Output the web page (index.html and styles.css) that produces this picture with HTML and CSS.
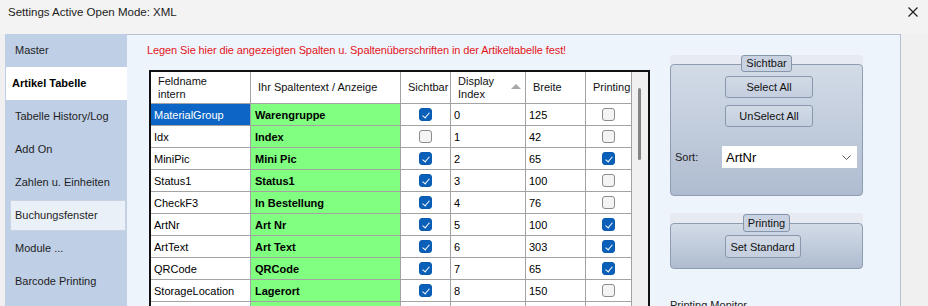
FILE: index.html
```html
<!DOCTYPE html>
<html lang="de">
    <head>
        <meta charset="UTF-8">
        <title>Settings Active Open Mode: XML</title>
        <link rel="stylesheet" href="styles.css">
    </head>

    <body>
        <div class="titlebar">
            <span class="title">Settings Active Open Mode: XML</span>
            <svg class="close" width="10" height="10" viewBox="0 0 10 10">
                <path d="M0.5 0.5 L9.5 9.5 M9.5 0.5 L0.5 9.5" stroke="#1a1a1a" stroke-width="1.1" fill="none"/>
            </svg>
        </div>

        <div class="main">
            <ul class="tabs">
                <li class="tab">Master</li>
                <li class="tab active">Artikel Tabelle</li>
                <li class="tab">Tabelle History/Log</li>
                <li class="tab">Add On</li>
                <li class="tab">Zahlen u. Einheiten</li>
                <li class="tab hover">Buchungsfenster</li>
                <li class="tab">Module ...</li>
                <li class="tab">Barcode Printing</li>
            </ul>

            <div class="panel">
                <p class="hint">Legen Sie hier die angezeigten Spalten u. Spaltenüberschriften in der Artikeltabelle fest!</p>

                <div class="grid">
                    <div class="cols">
                        <div class="row head">
                            <div class="cell">Feldname<br>intern</div>
                            <div class="cell">Ihr Spaltentext / Anzeige</div>
                            <div class="cell">Sichtbar</div>
                            <div class="cell sorted">Display<br>Index<span class="arrow"></span></div>
                            <div class="cell">Breite</div>
                            <div class="cell">Printing</div>
                        </div>
                        <div class="row">
                            <div class="cell sel">MaterialGroup</div>
                            <div class="cell caption">Warengruppe</div>
                            <div class="cell check"><span class="cb on"></span></div>
                            <div class="cell">0</div>
                            <div class="cell">125</div>
                            <div class="cell check"><span class="cb"></span></div>
                        </div>
                        <div class="row">
                            <div class="cell">Idx</div>
                            <div class="cell caption">Index</div>
                            <div class="cell check"><span class="cb"></span></div>
                            <div class="cell">1</div>
                            <div class="cell">42</div>
                            <div class="cell check"><span class="cb"></span></div>
                        </div>
                        <div class="row">
                            <div class="cell">MiniPic</div>
                            <div class="cell caption">Mini Pic</div>
                            <div class="cell check"><span class="cb on"></span></div>
                            <div class="cell">2</div>
                            <div class="cell">65</div>
                            <div class="cell check"><span class="cb on"></span></div>
                        </div>
                        <div class="row">
                            <div class="cell">Status1</div>
                            <div class="cell caption">Status1</div>
                            <div class="cell check"><span class="cb on"></span></div>
                            <div class="cell">3</div>
                            <div class="cell">100</div>
                            <div class="cell check"><span class="cb"></span></div>
                        </div>
                        <div class="row">
                            <div class="cell">CheckF3</div>
                            <div class="cell caption">In Bestellung</div>
                            <div class="cell check"><span class="cb on"></span></div>
                            <div class="cell">4</div>
                            <div class="cell">76</div>
                            <div class="cell check"><span class="cb"></span></div>
                        </div>
                        <div class="row">
                            <div class="cell">ArtNr</div>
                            <div class="cell caption">Art Nr</div>
                            <div class="cell check"><span class="cb on"></span></div>
                            <div class="cell">5</div>
                            <div class="cell">100</div>
                            <div class="cell check"><span class="cb on"></span></div>
                        </div>
                        <div class="row">
                            <div class="cell">ArtText</div>
                            <div class="cell caption">Art Text</div>
                            <div class="cell check"><span class="cb on"></span></div>
                            <div class="cell">6</div>
                            <div class="cell">303</div>
                            <div class="cell check"><span class="cb on"></span></div>
                        </div>
                        <div class="row">
                            <div class="cell">QRCode</div>
                            <div class="cell caption">QRCode</div>
                            <div class="cell check"><span class="cb on"></span></div>
                            <div class="cell">7</div>
                            <div class="cell">65</div>
                            <div class="cell check"><span class="cb on"></span></div>
                        </div>
                        <div class="row">
                            <div class="cell">StorageLocation</div>
                            <div class="cell caption">Lagerort</div>
                            <div class="cell check"><span class="cb on"></span></div>
                            <div class="cell">8</div>
                            <div class="cell">150</div>
                            <div class="cell check"><span class="cb"></span></div>
                        </div>
                        <div class="row">
                            <div class="cell"></div>
                            <div class="cell caption"></div>
                            <div class="cell check"></div>
                            <div class="cell"></div>
                            <div class="cell"></div>
                            <div class="cell check"></div>
                        </div>
                    </div>
                    <div class="scroll"><div class="thumb"></div></div>
                </div>

                <div class="side">
                    <div class="group">
                        <div class="frame frame-visible">
                            <span class="legend">Sichtbar</span>
                            <button class="btn first">Select All</button>
                            <button class="btn second">UnSelect All</button>
                            <div class="sort">
                                <span class="sort-label">Sort:</span>
                                <div class="combo">
                                    <span>ArtNr</span>
                                    <svg width="9" height="5" viewBox="0 0 9 5">
                                        <path d="M0.5 0.5 L4.5 4.5 L8.5 0.5" stroke="#555" stroke-width="1" fill="none"/>
                                    </svg>
                                </div>
                            </div>
                        </div>
                    </div>

                    <div class="group group-print">
                        <div class="frame frame-print">
                            <span class="legend">Printing</span>
                            <button class="btn std">Set Standard</button>
                        </div>
                    </div>

                    <div class="monitor">Printing Monitor</div>
                </div>
            </div>
        </div>
    </body>
</html>
```

FILE: styles.css
```css
* {
    box-sizing: border-box;
}

html, body {
    margin: 0;
    padding: 0;
}

body {
    width: 928px;
    height: 306px;
    overflow: hidden;
    background: #f0f0f0;
    font-family: "Liberation Sans", Arial, sans-serif;
    font-size: 11px;
    color: #000;
}

.titlebar {
    height: 34px;
    display: flex;
    justify-content: space-between;
    align-items: flex-start;
    padding: 5px 10px 0 8px;
    background: #f3f3f3;
}

.title {
    font-size: 11.5px;
    line-height: 14px;
    color: #1b1b1b;
}

.close {
    margin-top: 2px;
}

.main {
    display: flex;
    height: 272px;
    padding-left: 5px;
}

/* left tab strip */

.tabs {
    width: 122px;
    margin: 0;
    padding: 0;
    list-style: none;
    background: #bfcfe6;
}

.tab {
    height: 33px;
    line-height: 33px;
    padding-left: 10px;
    color: #1e1e1e;
    white-space: nowrap;
}

.tab.active {
    margin-left: 1px;
    padding-left: 6px;
    background: #fff;
    font-weight: bold;
    color: #000;
}

.tab.hover {
    height: 31px;
    line-height: 29px;
    margin: 1px 1px 1px 5px;
    padding-left: 4px;
    background: #eaf0f8;
    border: 1px solid #c9d3e1;
}

/* content panel */

.panel {
    width: 774px;
    display: grid;
    grid-template-columns: 523px 193px;
    grid-template-rows: auto 1fr;
    align-content: start;
    padding: 8px 0 0 20px;
    background: #eef4fb;
    border-top: 1px solid #b7c1ce;
    border-right: 1px solid #b7c1ce;
}

.hint {
    margin: 0;
    line-height: 14px;
    letter-spacing: -0.1px;
    color: #e3141c;
    white-space: nowrap;
}

/* data grid */

.grid {
    grid-column: 1;
    display: flex;
    width: 501px;
    height: 260px;
    margin: 13px 0 0 2px;
    border: 2px solid #111;
    border-bottom: none;
    background: #fff;
    overflow: hidden;
}

.cols {
    width: 481px;
}

.row {
    display: grid;
    grid-template-columns: 100px 150px 50px 75px 60px 46px;
    height: 22px;
}

.row.head {
    height: 32px;
}

.cell {
    display: flex;
    align-items: center;
    padding-left: 3px;
    border-right: 1px solid #a3a3a3;
    border-bottom: 1px solid #a3a3a3;
    white-space: nowrap;
    overflow: hidden;
}

.head .cell {
    padding-left: 7px;
    line-height: 13px;
    color: #111;
}

.head .cell.sorted {
    padding-right: 4px;
}

.arrow {
    margin-left: auto;
    margin-top: -2px;
    width: 0;
    height: 0;
    border-left: 5px solid transparent;
    border-right: 5px solid transparent;
    border-bottom: 5px solid #a8a8a8;
}

.cell.sel {
    background: #0d66c6;
    color: #fff;
}

.cell.caption {
    padding-left: 4px;
    background: #80ff80;
    font-weight: bold;
}

.cell.check {
    justify-content: center;
    padding-left: 0;
}

.cb {
    position: relative;
    width: 13px;
    height: 13px;
    border: 1px solid #8c8c8c;
    border-radius: 3px;
    background: #f4f4f4;
}

.cb.on {
    border-color: #0a5cb0;
    background: #0a5fb8;
}

.cb.on:after {
    content: "";
    position: absolute;
    left: 4px;
    top: 2px;
    width: 3px;
    height: 6px;
    border: solid #fff;
    border-width: 0 1px 1px 0;
    transform: rotate(40deg);
}

.scroll {
    width: 16px;
    background: #f0f0f0;
    padding: 16px 0 0 6px;
}

.thumb {
    width: 3px;
    height: 72px;
    border-radius: 2px;
    background: #858585;
}

/* right side groups */

.side {
    grid-column: 2;
    grid-row: 1 / span 2;
    padding-top: 12px;
}

.group {
    padding-top: 9px;
    background: #e7ebf1;
    border-radius: 3px 3px 4px 4px;
}

.group-print {
    margin-top: 17px;
    padding-top: 10px;
}

.frame {
    display: flex;
    flex-direction: column;
    align-items: center;
    border: 1px solid #8f9db2;
    border-radius: 4px;
    background: linear-gradient(#d3dbe7, #afbcd0);
}

.frame-visible {
    height: 132px;
}

.frame-print {
    height: 46px;
}

.legend {
    height: 17px;
    line-height: 15px;
    margin-top: -10px;
    padding: 0 4px;
    border: 1px solid #8796ab;
    border-radius: 3px;
    background: #c9d2e0;
    color: #111;
}

.frame-print .legend {
    height: 18px;
    line-height: 16px;
}

.btn {
    height: 22px;
    padding: 0;
    border: 1px solid #8a98ad;
    border-radius: 3px;
    background: linear-gradient(#d2dae6, #c4cede);
    font-family: inherit;
    font-size: 11px;
    color: #111;
}

.btn.first {
    width: 88px;
    margin: 4px 0 0 5px;
}

.btn.second {
    width: 88px;
    margin: 7px 0 0 5px;
}

.btn.std {
    width: 76px;
    height: 23px;
    margin: 3px 0 0 -8px;
}

.sort {
    display: flex;
    align-items: center;
    align-self: stretch;
    margin-top: 19px;
    padding-left: 4px;
}

.sort-label {
    width: 47px;
    color: #222;
}

.combo {
    display: flex;
    align-items: center;
    justify-content: space-between;
    width: 135px;
    height: 22px;
    padding: 0 6px 0 4px;
    background: #fff;
    font-size: 13px;
}

.monitor {
    margin-top: 29px;
    line-height: 14px;
    color: #222;
}
```
